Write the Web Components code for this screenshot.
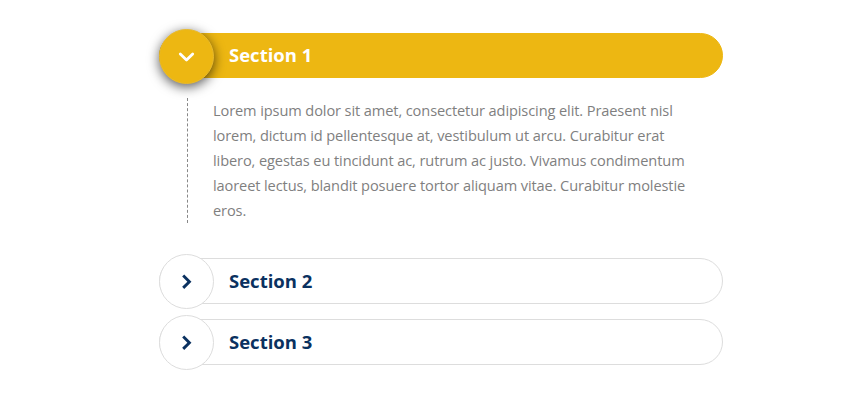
<!DOCTYPE html>
<html lang="en">
<head>
<meta charset="utf-8">
<title>Accordion</title>
<style>
body {
    margin: 0;
    background: #fff;
    font-family: "Open Sans", "Noto Sans", sans-serif;
}
</style>
</head>
<body>

<accordion-list>
    <accordion-item heading="Section 1" open>
        <text-line>Lorem ipsum dolor sit amet, consectetur adipiscing elit. Praesent nisl</text-line>
        <text-line>lorem, dictum id pellentesque at, vestibulum ut arcu. Curabitur erat</text-line>
        <text-line>libero, egestas eu tincidunt ac, rutrum ac justo. Vivamus condimentum</text-line>
        <text-line>laoreet lectus, blandit posuere tortor aliquam vitae. Curabitur molestie</text-line>
        <text-line>eros.</text-line>
    </accordion-item>
    <accordion-item heading="Section 2"></accordion-item>
    <accordion-item heading="Section 3"></accordion-item>
</accordion-list>

<template id="item-template">
<style>
:host {
    display: block;
    --line: #ddd;
    --ink: #0a3160;
    --fill: #fff;
}
:host([open]) {
    --line: #edb712;
    --ink: #fff;
    --fill: #edb712;
}
.bar {
    box-sizing: border-box;
    display: flex;
    align-items: center;
    height: 46px;
    border: 1px solid var(--line);
    border-radius: 23px;
    background: var(--fill);
    color: var(--ink);
    cursor: pointer;
}
:host([open]) .bar {
    height: 45px;
}
.knob {
    box-sizing: border-box;
    display: flex;
    flex: none;
    align-items: center;
    justify-content: center;
    width: 55px;
    height: 55px;
    margin: -5px 15px -5px -1px;
    border: 1px solid var(--line);
    border-radius: 50%;
    background: var(--fill);
}
:host([open]) .knob {
    margin-bottom: -7px;
    border-color: #e9ba2c;
    box-shadow: 0 3px 12px rgba(0, 0, 0, .65);
}
svg {
    width: 19px;
    height: 19px;
    fill: none;
    stroke: currentColor;
    stroke-width: 2.9;
}
:host([open]) svg {
    stroke-width: 2.8;
    stroke-linecap: round;
    stroke-linejoin: round;
}
h3 {
    margin: 0;
    font-size: 18.5px;
    font-weight: 700;
    line-height: 24px;
    white-space: nowrap;
}
:host([open]) h3 {
    padding-bottom: 2px;
}
.body {
    display: none;
    margin: 20px 0 35px 28px;
    padding-left: 25px;
    border-left: 1px dashed #888;
    color: #7f7f7f;
    font-size: 14.6px;
    letter-spacing: -.11px;
    line-height: 25px;
}
:host([open]) .body {
    display: block;
}
</style>
<div class="bar">
    <div class="knob"><svg viewBox="0 0 19 19"><path/></svg></div>
    <h3></h3>
</div>
<div class="body"><slot></slot></div>
</template>

<script>
class TextLine extends HTMLElement {
    constructor() {
        super();
        this.attachShadow({mode: 'open'});
        this.shadowRoot.innerHTML = `
            <style>:host { display: block; white-space: nowrap; }</style>
            <slot></slot>`;
    }
}

class AccordionItem extends HTMLElement {
    static get observedAttributes() {
        return ['open', 'heading'];
    }

    constructor() {
        super();
        this.attachShadow({mode: 'open'});
        const temp = document.getElementById('item-template');
        this.shadowRoot.appendChild(temp.content.cloneNode(true));
        this.shadowRoot.querySelector('.bar').addEventListener('click', () => {
            this.toggleAttribute('open');
        });
    }

    render() {
        const icon = this.hasAttribute('open') ? 'M3.3 6.9l6.2 6L15.7 6.9' : 'M6.2 3.5l6.2 6.2-6.2 6.2';
        this.shadowRoot.querySelector('path').setAttribute('d', icon);
        this.shadowRoot.querySelector('h3').textContent = this.getAttribute('heading');
    }

    connectedCallback() {
        this.render();
    }

    attributeChangedCallback() {
        this.render();
    }
}

class AccordionList extends HTMLElement {
    constructor() {
        super();
        this.attachShadow({mode: 'open'});
        this.shadowRoot.innerHTML = `
            <style>
            :host {
                display: block;
                width: 564px;
                margin: 0 0 0 159px;
                padding: 33px 0 40px;
            }
            ::slotted(accordion-item:last-child) {
                margin-top: 15px;
            }
            </style>
            <slot></slot>`;
    }
}

customElements.define('text-line', TextLine);
customElements.define('accordion-item', AccordionItem);
customElements.define('accordion-list', AccordionList);
</script>
</body>
</html>
